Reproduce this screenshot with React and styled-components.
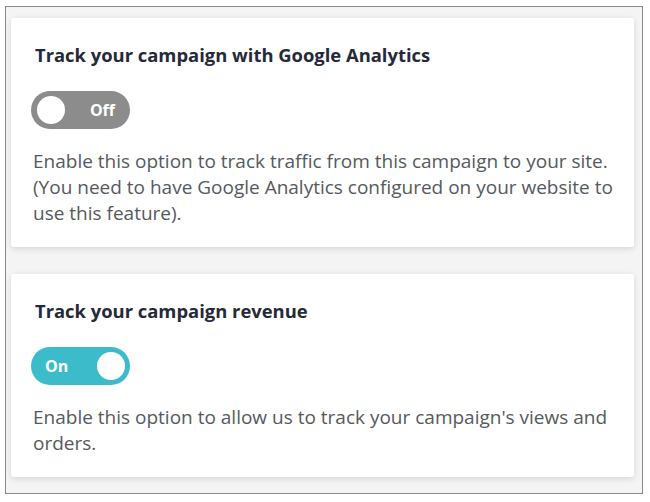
import styled, { createGlobalStyle } from "styled-components";

const GlobalStyle = createGlobalStyle`
  body {
    margin: 0;
    background: #ffffff;
    font-family: "Open Sans", "Noto Sans", sans-serif;
  }
`;

const settings = [
  {
    id: "ga",
    title: "Track your campaign with Google Analytics",
    on: false,
    text: "Enable this option to track traffic from this campaign to your site. (You need to have Google Analytics configured on your website to use this feature).",
  },
  {
    id: "revenue",
    title: "Track your campaign revenue",
    on: true,
    text: "Enable this option to allow us to track your campaign's views and orders.",
  },
];

const Toggle = ({ on }) => (
  <Switch $on={on}>
    {on ? (
      <>
        <SwitchLabel>On</SwitchLabel>
        <Knob />
      </>
    ) : (
      <>
        <Knob />
        <SwitchLabel>Off</SwitchLabel>
      </>
    )}
  </Switch>
);

export default function App() {
  return (
    <>
      <GlobalStyle />
      <Frame>
        {settings.map((s) => (
          <Card key={s.id}>
            <Title>{s.title}</Title>
            <Toggle on={s.on} />
            <Description>{s.text}</Description>
          </Card>
        ))}
      </Frame>
    </>
  );
}

const Frame = styled.div`
  box-sizing: border-box;
  width: 638px;
  height: 488px;
  margin: 6px 0 0 5px;
  border: 1px solid #8a8a8a;
  background: #f4f4f4;
  padding: 11px 8px 15px 5px;
  display: flex;
  flex-direction: column;
  gap: 27px;
`;

const Card = styled.section`
  background: #ffffff;
  border-radius: 3px;
  box-shadow: 0 2px 6px rgba(0, 0, 0, 0.12);
  padding: 24px 12px 21px 20px;
  display: flex;
  flex-direction: column;
  align-items: flex-start;
`;

const Title = styled.h3`
  margin: 0 0 0 4px;
  font-size: 18.4px;
  line-height: 26px;
  font-weight: 700;
  color: #262938;
`;

const Switch = styled.div`
  margin-top: 23px;
  box-sizing: border-box;
  width: 99px;
  height: 38px;
  border-radius: 19px;
  padding: 0 5px 0 6px;
  background: ${({ $on }) => ($on ? "#3cbccb" : "#8c8c8c")};
  display: flex;
  align-items: center;
  justify-content: space-between;
`;

const Knob = styled.span`
  width: 28px;
  height: 28px;
  border-radius: 50%;
  background: #ffffff;
`;

const SwitchLabel = styled.span`
  padding: 0 10px 0 8px;
  color: #ffffff;
  font-size: 16px;
  font-weight: 700;
`;

const Description = styled.p`
  margin: 19px 0 0 2px;
  font-size: 19px;
  line-height: 26px;
  color: #555a60;
`;
